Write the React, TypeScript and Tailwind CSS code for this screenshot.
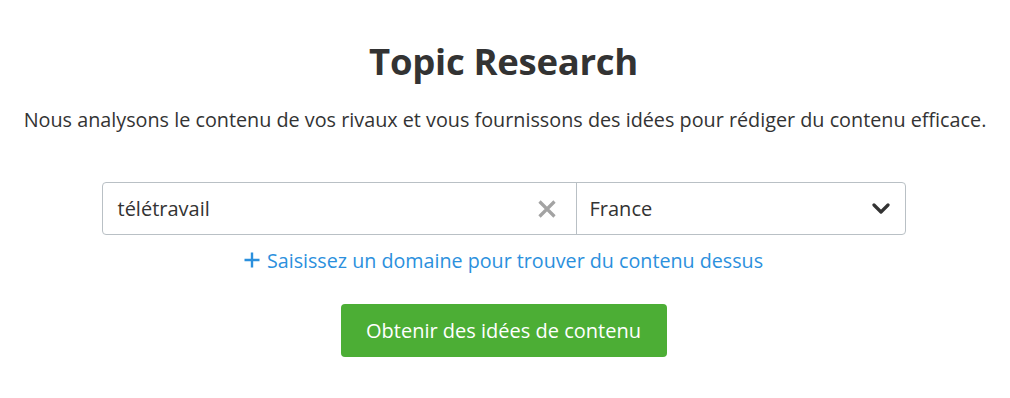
import React from "react";

export default function App() {
  return (
    <div
      className="w-[1010px] h-[398px] bg-white flex flex-col items-center pr-[3px] text-[#333333]"
      style={{ fontFamily: '"Open Sans", "Noto Sans", sans-serif' }}
    >
      <h1 className="mt-[37px] text-[36.5px] leading-[48px] font-bold tracking-[-0.3px]">
        Topic Research
      </h1>
      <p className="mt-[22px] ml-[3px] text-[19.8px] leading-[26px]">
        Nous analysons le contenu de vos rivaux et vous fournissons des idées pour rédiger du contenu efficace.
      </p>

      <div className="mt-[49px] w-[804px] h-[53px] flex border border-[#b9c0c5] rounded-[4px]">
        <div className="flex-1 flex items-center pl-[15px] pr-[19px]">
          <span className="flex-1 text-[20px]">télétravail</span>
          <svg width="20" height="20" viewBox="0 0 20 20" className="text-[#a3a3a3]">
            <path d="M2.5 2.5 L17.5 17.5 M17.5 2.5 L2.5 17.5" stroke="currentColor" strokeWidth="3.2" />
          </svg>
        </div>
        <div className="w-[329px] border-l border-[#b9c0c5] flex items-center pl-[13px] pr-[15px]">
          <span className="flex-1 text-[20px]">France</span>
          <svg width="18" height="11" viewBox="0 0 18 11" className="text-[#333333]">
            <path d="M2 2 L9 9 L16 2" stroke="currentColor" strokeWidth="3.2" fill="none" strokeLinecap="round" strokeLinejoin="round" />
          </svg>
        </div>
      </div>

      <div className="mt-[14px] flex items-center gap-[7px] text-[#2b90dd] text-[19.7px] leading-[24px]">
        <svg width="16" height="16" viewBox="0 0 16 16" className="mt-[-2px]">
          <path d="M8 0.5 V15.5 M0.5 8 H15.5" stroke="currentColor" strokeWidth="2.4" />
        </svg>
        <span>Saisissez un domaine pour trouver du contenu dessus</span>
      </div>

      <button className="mt-[31px] w-[326px] h-[53px] rounded-[4px] bg-[#4cae35] text-white text-[20px]">
        Obtenir des idées de contenu
      </button>
    </div>
  );
}
